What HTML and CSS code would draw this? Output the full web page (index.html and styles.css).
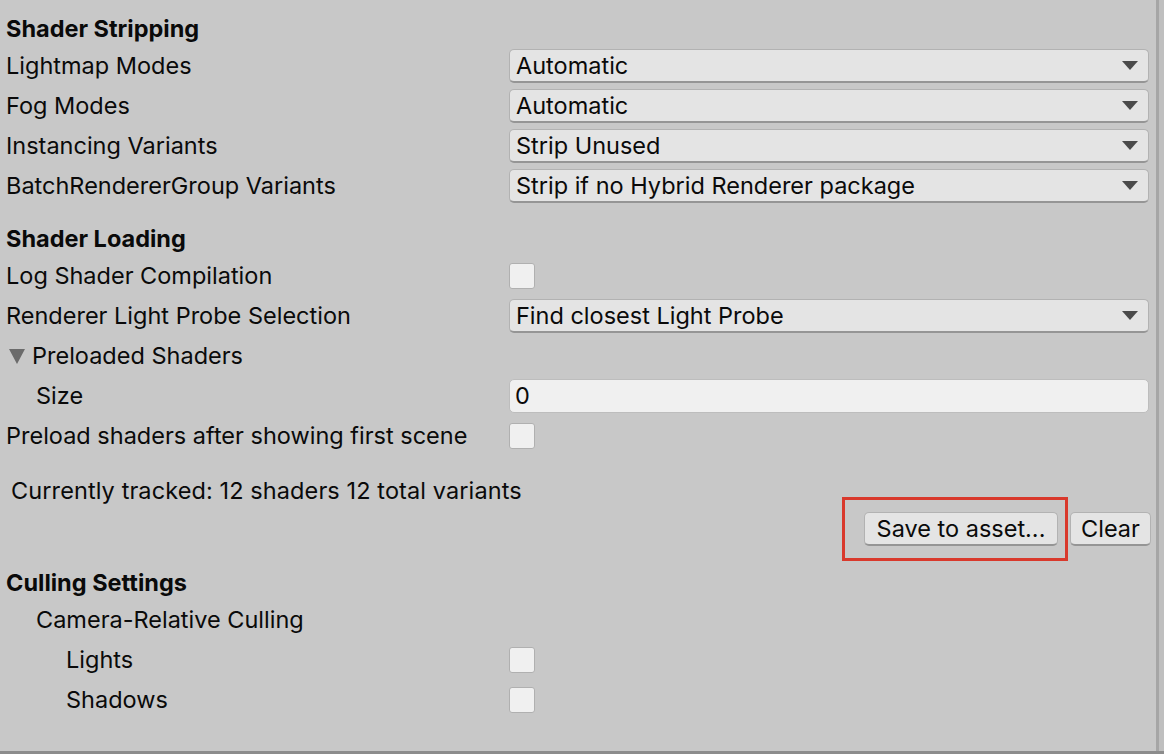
FILE: index.html
```html
<!DOCTYPE html>
<html>
<head>
<meta charset="utf-8">
<link rel="stylesheet" href="styles.css">
</head>
<body>
<div class="window">
  <div class="inspector">
    <div class="header first">Shader Stripping</div>
    <div class="row"><div class="label">Lightmap Modes</div><div class="field"><div class="dropdown"><span>Automatic</span><i class="arrow"></i></div></div></div>
    <div class="row"><div class="label">Fog Modes</div><div class="field"><div class="dropdown"><span>Automatic</span><i class="arrow"></i></div></div></div>
    <div class="row"><div class="label">Instancing Variants</div><div class="field"><div class="dropdown"><span>Strip Unused</span><i class="arrow"></i></div></div></div>
    <div class="row"><div class="label">BatchRendererGroup Variants</div><div class="field"><div class="dropdown"><span>Strip if no Hybrid Renderer package</span><i class="arrow"></i></div></div></div>

    <div class="header">Shader Loading</div>
    <div class="row"><div class="label">Log Shader Compilation</div><div class="field"><div class="checkbox"></div></div></div>
    <div class="row"><div class="label">Renderer Light Probe Selection</div><div class="field"><div class="dropdown"><span>Find closest Light Probe</span><i class="arrow"></i></div></div></div>
    <div class="row"><div class="label foldout"><i class="fold-arrow"></i>Preloaded Shaders</div></div>
    <div class="row"><div class="label indent1">Size</div><div class="field"><div class="textfield">0</div></div></div>
    <div class="row"><div class="label">Preload shaders after showing first scene</div><div class="field"><div class="checkbox"></div></div></div>

    <div class="tracked">Currently tracked: 12 shaders 12 total variants</div>
    <div class="buttons">
      <div class="highlight"><div class="button save">Save to asset...</div></div>
      <div class="button clear">Clear</div>
    </div>

    <div class="header culling">Culling Settings</div>
    <div class="row"><div class="label indent1">Camera-Relative Culling</div></div>
    <div class="row"><div class="label indent2">Lights</div><div class="field"><div class="checkbox"></div></div></div>
    <div class="row"><div class="label indent2">Shadows</div><div class="field"><div class="checkbox"></div></div></div>
  </div>
  <div class="scrollbar"></div>
</div>
</body>
</html>
```
FILE: styles.css
```css
html, body {
  margin: 0;
  padding: 0;
  width: 1164px;
  height: 754px;
  overflow: hidden;
  background: #c8c8c8;
}
body {
  font-family: Inter, "Noto Sans", sans-serif;
  font-size: 23.5px;
  color: #0a0a0a;
}
.window {
  display: flex;
  height: 751px;
  border-bottom: 3px solid #8c8c8c;
}
.inspector {
  flex: 1;
  padding-left: 6px;
  padding-right: 7px;
}
.scrollbar {
  width: 5px;
  border-left: 3px solid #a6a6a6;
  background: #bfbfbf;
}
.header {
  font-weight: 700;
  height: 34px;
  line-height: 34px;
  margin-top: 16px;
}
.header.first {
  margin-top: 12px;
}
.header.culling {
  margin-top: 5px;
}
.row {
  display: flex;
  align-items: center;
  height: 40px;
}
.label {
  width: 503px;
  flex: none;
  white-space: nowrap;
  line-height: 40px;
}
.indent1 { padding-left: 30px; box-sizing: border-box; }
.indent2 { padding-left: 60px; box-sizing: border-box; }
.foldout {
  display: flex;
  align-items: center;
}
.fold-arrow {
  display: inline-block;
  width: 0;
  height: 0;
  border-left: 8px solid transparent;
  border-right: 8px solid transparent;
  border-top: 15px solid #6b6b6b;
  margin-left: 3px;
  margin-right: 7px;
  margin-top: 1px;
}
.field {
  flex: 1;
  display: flex;
  align-items: center;
}
.dropdown {
  flex: 1;
  height: 34px;
  box-sizing: border-box;
  background: #e4e4e4;
  border: 1px solid #b2b2b2;
  border-bottom: 2px solid #959595;
  border-radius: 5px;
  display: flex;
  align-items: center;
  padding-left: 6px;
  padding-right: 10px;
}
.dropdown span {
  flex: 1;
}
.arrow {
  width: 0;
  height: 0;
  border-left: 8px solid transparent;
  border-right: 8px solid transparent;
  border-top: 9px solid #4a4a4a;
}
.textfield {
  flex: 1;
  height: 34px;
  box-sizing: border-box;
  background: #f0f0f0;
  border: 1px solid #bdbdbd;
  border-radius: 5px;
  padding-left: 5px;
  line-height: 32px;
}
.checkbox {
  width: 26px;
  height: 26px;
  box-sizing: border-box;
  background: #f0f0f0;
  border: 1px solid #b0b0b0;
  border-radius: 3px;
}
.tracked {
  margin-top: 15px;
  padding-left: 5px;
  height: 40px;
  line-height: 40px;
  letter-spacing: 0.1px;
}
.buttons {
  display: flex;
  justify-content: flex-end;
  align-items: center;
  margin-top: -14px;
  margin-right: -2px;
  height: 64px;
}
.highlight {
  border: 3px solid #d9392c;
  padding: 12px 7px 12px 19px;
  margin-right: 2px;
}
.button {
  height: 34px;
  box-sizing: border-box;
  background: #e4e4e4;
  border: 1px solid #b2b2b2;
  border-bottom: 2px solid #959595;
  border-radius: 5px;
  line-height: 31px;
  text-align: center;
  white-space: nowrap;
}
.button.save {
  width: 194px;
}
.button.clear {
  width: 81px;
}
```
